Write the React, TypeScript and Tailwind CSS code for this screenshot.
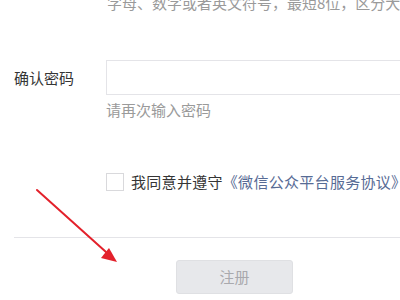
import React from 'react'

const font = { fontFamily: '"Noto Sans CJK SC", "Noto Sans", sans-serif' }

export default function App() {
  return (
    <div className="relative w-[400px] h-[300px] overflow-hidden bg-white" style={font}>
      <div className="w-[560px] pl-[14px] -mt-[8px] text-[15px] leading-[22px]">
        {/* tail of the password field hint */}
        <div className="pl-[93px] text-[#9a9a9a] whitespace-nowrap">
          字母、数字或者英文符号，最短8位，区分大小写
        </div>

        {/* confirm password */}
        <div className="mt-[46px] flex">
          <label className="w-[92px] shrink-0 h-[35px] flex items-center text-[#353535]">
            确认密码
          </label>
          <div className="flex-1">
            <input
              type="password"
              className="block w-full h-[35px] border border-[#e4e4e8] outline-none px-3"
            />
            <div className="mt-[4px] text-[#9a9a9a]">请再次输入密码</div>
          </div>
        </div>

        {/* agreement */}
        <div className="mt-[50px] pl-[92px] flex items-center whitespace-nowrap tracking-[0.3px]">
          <span className="w-[18px] h-[18px] border border-[#d9d9dc] bg-white shrink-0" />
          <span className="ml-[7px] text-[#353535]">我同意并遵守</span>
          <span className="text-[#576b95]">《微信公众平台服务协议》</span>
        </div>

        <div className="mt-[44px] border-t border-[#e4e4e8]" />

        <div className="mt-[22px] pl-[162px]">
          <button
            disabled
            className="w-[117px] h-[34px] rounded-[3px] bg-[#e7e8eb] border border-[#dfe0e3] text-[#a9a9ad]"
          >
            注册
          </button>
        </div>
      </div>

      {/* red annotation arrow */}
      <svg className="absolute left-0 top-0 pointer-events-none" width="400" height="300">
        <line x1="37" y1="190" x2="106" y2="252" stroke="#e3212b" strokeWidth="2" strokeLinecap="round" />
        <polygon points="117,262 101,258 109,248" fill="#e3212b" />
      </svg>
    </div>
  )
}
